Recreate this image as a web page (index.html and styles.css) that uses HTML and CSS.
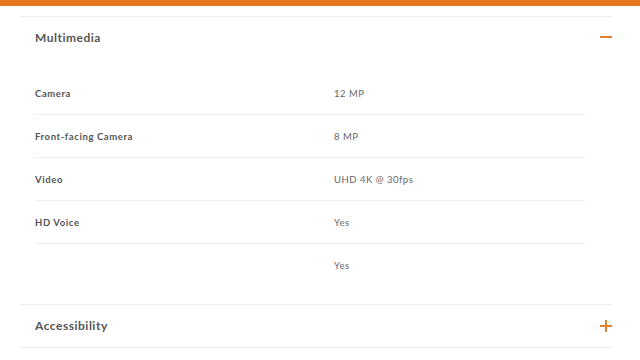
FILE: index.html
```html
<!DOCTYPE html>
<html lang="en">
<head>
<meta charset="utf-8">
<title>Specifications</title>
<link rel="stylesheet" href="styles.css">
</head>
<body>
<div class="topbar"></div>
<div class="specs">
  <section class="acc open">
    <div class="acc-head">
      <h2 class="acc-title">Multimedia</h2>
      <span class="acc-icon minus"></span>
    </div>
    <div class="acc-body">
      <div class="row"><span class="label">Camera</span><span class="value">12 MP</span></div>
      <div class="row"><span class="label">Front-facing Camera</span><span class="value">8 MP</span></div>
      <div class="row"><span class="label">Video</span><span class="value">UHD 4K @ 30fps</span></div>
      <div class="row"><span class="label">HD Voice</span><span class="value">Yes</span></div>
      <div class="row"><span class="label"></span><span class="value">Yes</span></div>
    </div>
  </section>
  <section class="acc">
    <div class="acc-head">
      <h2 class="acc-title">Accessibility</h2>
      <span class="acc-icon plus"></span>
    </div>
  </section>
</div>
</body>
</html>
```
FILE: styles.css
```css
html, body {
  margin: 0;
  padding: 0;
  background: #fff;
}
body {
  font-family: Lato, "Open Sans", "Liberation Sans", sans-serif;
  color: #555;
}
.topbar {
  height: 6px;
  background: #e87722;
}
.specs {
  margin: 10px 28px 0 20px;
}
.acc {
  border-top: 1px solid #ededed;
}
.acc:last-child {
  border-bottom: 1px solid #ededed;
}
.acc-head {
  box-sizing: border-box;
  height: 42px;
  display: flex;
  align-items: center;
  justify-content: space-between;
  padding: 0 0 1px 15px;
}
.open .acc-head {
  height: 44px;
  padding-bottom: 4px;
}
.acc-title {
  margin: 0;
  font-size: 12px;
  font-weight: 700;
  color: #555;
  letter-spacing: 0.5px;
}
.acc-icon {
  position: relative;
  width: 12px;
  height: 12px;
}
.acc-icon::before,
.acc-icon::after {
  content: "";
  position: absolute;
  background: #e2802e;
}
.acc-icon::before {
  left: 0;
  right: 0;
  top: 5px;
  height: 2px;
}
.plus::after {
  top: 0;
  bottom: 0;
  left: 5px;
  width: 2px;
}
.acc-body {
  padding: 11px 27px 17px 15px;
}
.row {
  display: grid;
  grid-template-columns: 299px 1fr;
  align-items: center;
  height: 42px;
  border-bottom: 1px solid #efefef;
  font-size: 9.5px;
}
.row:last-child {
  border-bottom: none;
  height: 43px;
}
.label {
  font-weight: 700;
  color: #555;
  letter-spacing: 0.6px;
}
.value {
  color: #666;
  letter-spacing: 0.5px;
}
```
